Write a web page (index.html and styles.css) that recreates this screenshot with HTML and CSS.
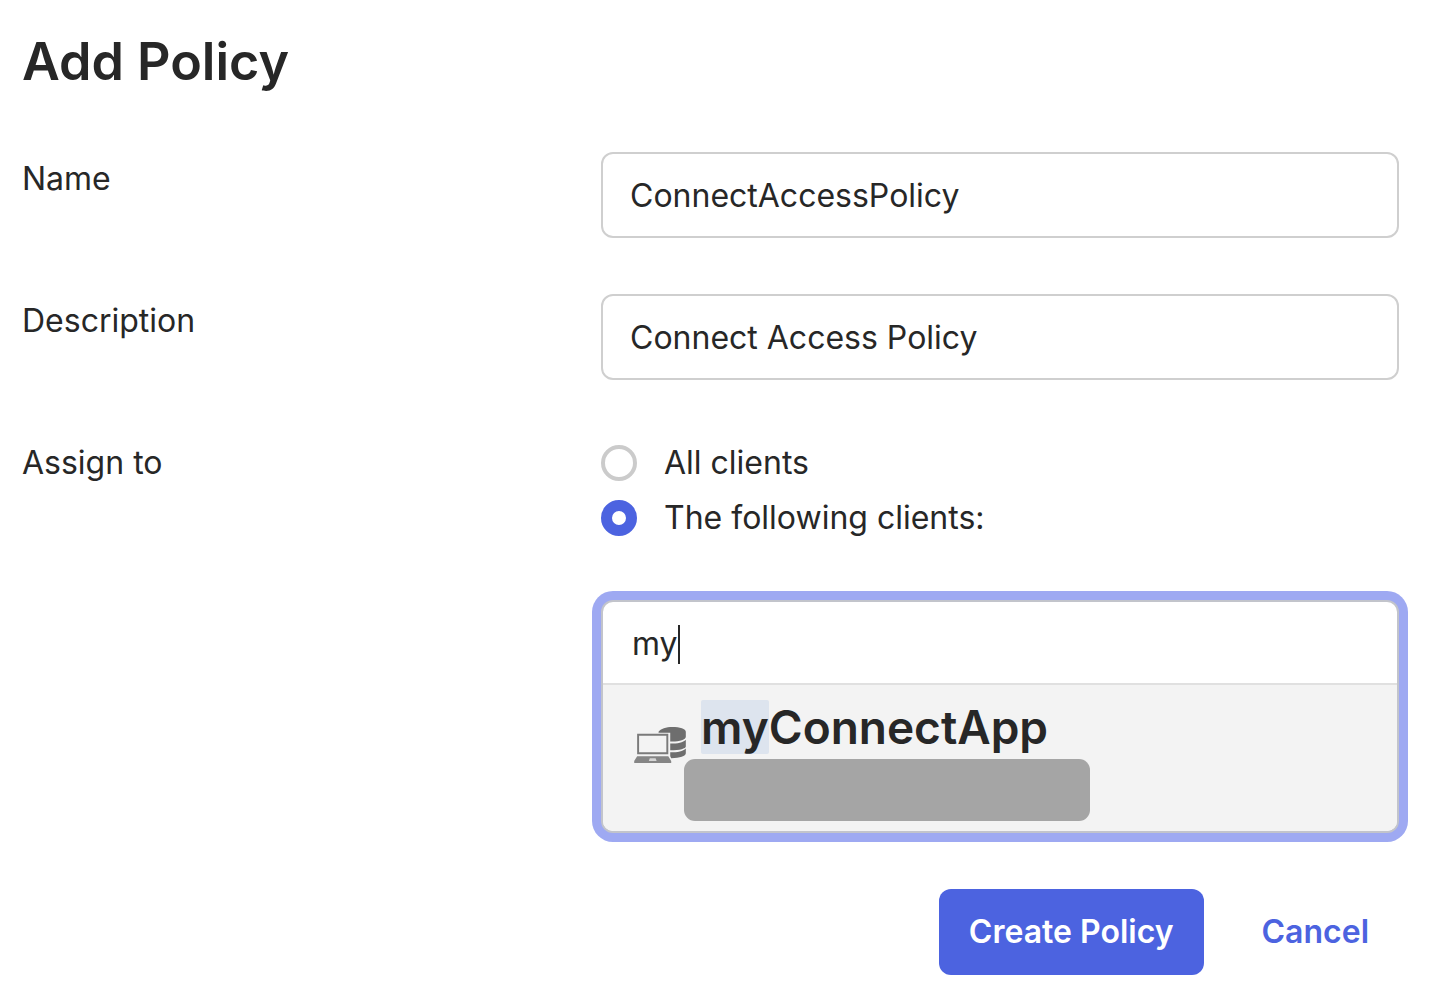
FILE: index.html
```html
<!DOCTYPE html>
<html lang="en">
<head>
  <meta charset="UTF-8">
  <meta name="viewport" content="width=device-width, initial-scale=1.0">
  <title>Add Policy</title>
  <link rel="stylesheet" href="styles.css">
</head>
<body>

  <form class="policy-form">
    <h1>Add Policy</h1>

    <div class="row">
      <label class="row-label" for="policyName">Name</label>
      <input class="text-field" type="text" id="policyName" value="ConnectAccessPolicy">
    </div>

    <div class="row">
      <label class="row-label" for="policyDescription">Description</label>
      <input class="text-field" type="text" id="policyDescription" value="Connect Access Policy">
    </div>

    <div class="row" role="radiogroup" aria-labelledby="assignLabel">
      <span class="row-label" id="assignLabel">Assign to</span>
      <div class="assign">
        <label class="radio"><input type="radio" name="assign" value="all"> All clients</label>
        <label class="radio"><input type="radio" name="assign" value="selected" checked> The following clients:</label>

        <!-- Client search -->
        <div class="combo">
          <label class="combo-search">
            <input type="text" id="clientSearch" value="my" aria-label="Search clients" autocomplete="off">
            <span class="caret"></span>
          </label>
          <button class="option" type="button">
            <svg class="option-icon" viewBox="0 0 54 38" aria-hidden="true">
              <path fill="#6e6e6e" d="M25 5C27 2 33 0 39 0c8 0 14 2 14 5v5c0 3-6 5-14 5h-2V6H25z"/>
              <path fill="#6e6e6e" d="M37 17c8 0 13-1 16-4v7c0 2-6 4-16 4z"/>
              <path fill="#6e6e6e" d="M37 26c8 0 13-1 16-4v5c0 3-6 5-15 5l-1-2z"/>
              <path fill="none" stroke="#7a7a7a" stroke-width="2" d="M4 8h30v19H4z"/>
              <path fill="#858585" d="M3 30h32l3 5v2H0v-2z"/>
              <path fill="#d5d5d5" d="M16 32h6l1 3h-8z"/>
            </svg>
            <span class="option-body">
              <span class="option-title"><mark>my</mark>ConnectApp</span>
              <span class="option-id"></span>
            </span>
          </button>
        </div>
      </div>
    </div>

    <div class="actions">
      <button class="btn btn-primary" type="submit">Create Policy</button>
      <button class="btn btn-link" type="button">Cancel</button>
    </div>
  </form>

</body>
</html>
```
FILE: styles.css
```css
* {
  box-sizing: border-box;
}
body {
  margin: 0;
  background-color: #fff;
  color: #272727;
  font-family: Inter, sans-serif;
  font-size: 32px;
  line-height: 40px;
}
input, button {
  font: inherit;
  color: inherit;
}
.policy-form {
  padding: 28px 31px 10px 22px;
}
h1 {
  margin: 0 0 56px;
  font-size: 52px;
  font-weight: 600;
  line-height: 68px;
}
.row {
  display: grid;
  grid-template-columns: minmax(0, 579px) minmax(0, 1fr);
  margin-bottom: 56px;
}
.row-label {
  padding-top: 7px;
}
.text-field {
  width: 100%;
  height: 86px;
  padding: 0 27px;
  border: 2px solid #cfcfcf;
  border-radius: 12px;
  background: #fff;
  outline: none;
}

/* Radio buttons */
.assign {
  padding-top: 7px;
}
.radio {
  display: flex;
  align-items: center;
  gap: 27px;
  margin-bottom: 15px;
}
.radio input {
  appearance: none;
  width: 36px;
  height: 36px;
  margin: 0;
  border: 4px solid #cbcbcb;
  border-radius: 50%;
  background: #fff;
}
.radio input:checked {
  border: 11px solid #4c63e0;
}

/* Client search with its open list */
.combo {
  margin-top: 62px;
  border: 2px solid #c2c4cb;
  border-radius: 12px;
  background: #fff;
  box-shadow: 0 0 0 9px #9ea9f2;
  overflow: hidden;
}
.combo-search {
  display: flex;
  align-items: center;
  height: 81px;
  padding: 3px 29px 0;
}
.combo-search input {
  field-sizing: content;
  padding: 0;
  border: none;
  background: none;
  outline: none;
  caret-color: transparent;
}
.caret {
  width: 2px;
  height: 39px;
  background: #272727;
}
.option {
  display: flex;
  width: 100%;
  padding: 15px 31px 10px;
  border: none;
  border-top: 2px solid #e0e0e0;
  background: #f3f3f3;
  text-align: left;
}
.option-icon {
  flex: none;
  width: 53px;
  height: 37px;
  margin: 27px -3px 0 0;
}
.option-body {
  display: flex;
  flex-direction: column;
  flex: 1;
  gap: 5px;
}
.option-title {
  padding-left: 17px;
  font-size: 46px;
  font-weight: 600;
  line-height: 54px;
}
.option-title mark {
  display: inline-block;
  border-radius: 2px;
  background: #dde4ee;
  color: inherit;
}
.option-id {
  width: 100%;
  max-width: 406px;
  height: 62px;
  border-radius: 11px;
  background: #a5a5a5;
}

/* Buttons */
.actions {
  display: flex;
  justify-content: flex-end;
  gap: 28px;
}
.btn {
  height: 86px;
  padding: 0 30px;
  border: none;
  border-radius: 12px;
  font-weight: 600;
}
.btn-primary {
  background: #4c63e0;
  color: #fff;
}
.btn-link {
  background: none;
  color: #4c63e0;
}
```
